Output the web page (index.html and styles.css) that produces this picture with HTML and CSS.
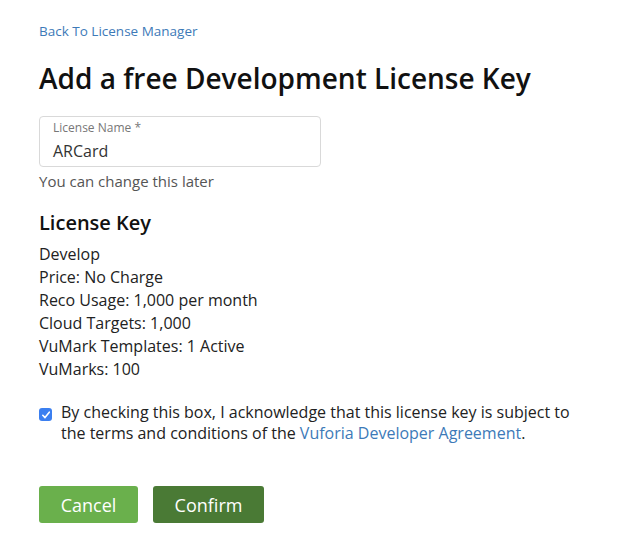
FILE: index.html
```html
<!DOCTYPE html>
<html>
<head>
<meta charset="utf-8">
<link rel="stylesheet" href="styles.css">
</head>
<body>
<div class="page">
  <a class="back" href="#">Back To License Manager</a>
  <h1 class="title">Add a free Development License Key</h1>
  <div class="field">
    <div class="field-label">License Name *</div>
    <div class="field-value">ARCard</div>
  </div>
  <div class="hint">You can change this later</div>
  <h2 class="subtitle">License Key</h2>
  <ul class="details">
    <li>Develop</li>
    <li>Price: No Charge</li>
    <li>Reco Usage: 1,000 per month</li>
    <li>Cloud Targets: 1,000</li>
    <li>VuMark Templates: 1 Active</li>
    <li>VuMarks: 100</li>
  </ul>
  <div class="agree">
    <span class="checkbox"><svg width="10" height="10" viewBox="0 0 10 10"><path d="M1.8 5.3 L4 7.6 L8.3 2.2" fill="none" stroke="#fff" stroke-width="1.6" stroke-linecap="round" stroke-linejoin="round"/></svg></span>
    <p class="agree-text">By checking this box, I acknowledge that this license key is subject to the terms and conditions of the <a href="#">Vuforia Developer Agreement</a>.</p>
  </div>
  <div class="actions">
    <button class="btn btn-cancel">Cancel</button>
    <button class="btn btn-confirm">Confirm</button>
  </div>
</div>
</body>
</html>
```
FILE: styles.css
```css
html, body { margin: 0; padding: 0; background: #fff; }
body { font-family: "Open Sans", "Noto Sans", sans-serif; color: #222; }
.page { padding: 22px 39px 0 39px; display: flex; flex-direction: column; align-items: flex-start; }
.back { font-size: 13.5px; line-height: 18px; color: #3d7ab8; text-decoration: none; }
.title { margin: 19px 0 0 0; font-size: 28px; line-height: 38px; font-weight: 600; color: #111; }
.field { margin-top: 19px; width: 282px; height: 51px; box-sizing: border-box; border: 1px solid #d9d9d9; border-radius: 4px; padding: 3px 0 0 13px; }
.field-label { font-size: 12px; line-height: 16px; color: #777; }
.field-value { font-size: 16px; line-height: 22px; color: #333; margin-top: 4px; }
.hint { margin-top: 4px; font-size: 15px; line-height: 20px; color: #555; }
.subtitle { margin: 18px 0 0 0; font-size: 20px; line-height: 28px; font-weight: 600; color: #111; }
.details { list-style: none; margin: 6px 0 0 0; padding: 0; font-size: 16px; line-height: 23px; color: #222; }
.agree { margin-top: 21px; display: flex; align-items: flex-start; gap: 9px; }
.checkbox { width: 13px; height: 13px; border-radius: 3px; background: #3b7ff0; display: flex; align-items: center; justify-content: center; margin-top: 6px; flex: none; }
.agree-text { margin: 0; font-size: 16px; line-height: 21px; color: #222; width: 525px; }
.agree-text a { color: #3d7ab8; text-decoration: none; }
.actions { margin-top: 42px; display: flex; gap: 15px; }
.btn { height: 37px; border: none; border-radius: 3px; color: #fff; font-family: "Open Sans", "Noto Sans", sans-serif; font-size: 18px; padding: 0; }
.btn-cancel { width: 99px; background: #6ab04c; }
.btn-confirm { width: 111px; background: #4a7a35; }
```
